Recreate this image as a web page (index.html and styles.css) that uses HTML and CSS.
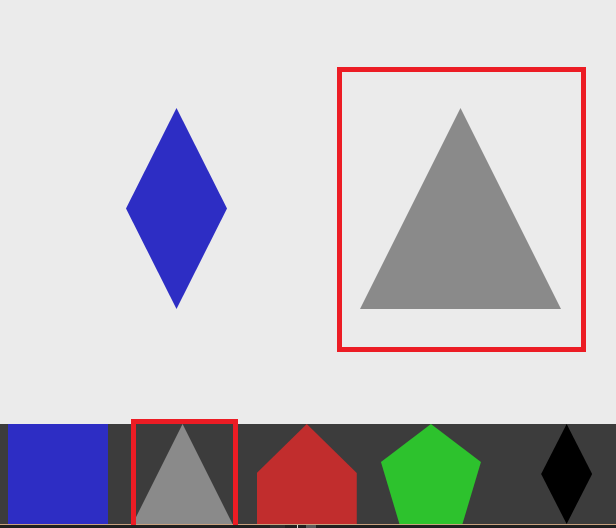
FILE: index.html
```html
<!DOCTYPE html>
<html lang="en">
<head>
<meta charset="utf-8">
<title>Shapes</title>
<link rel="stylesheet" href="styles.css">
</head>
<body>
<main class="stage">
  <div class="shape big-diamond"></div>
  <div class="target">
    <div class="shape big-triangle"></div>
  </div>
</main>
<nav class="tray">
  <div class="item square"></div>
  <div class="item triangle"></div>
  <div class="item house"></div>
  <div class="item pentagon"></div>
  <div class="item rhombus"></div>
  <div class="selection"></div>
</nav>
<div class="strip">
  <span class="strip-a"></span>
  <span class="strip-b"></span>
  <span class="strip-c"></span>
</div>
</body>
</html>
```
FILE: styles.css
```css
html, body {
  margin: 0;
  padding: 0;
  height: 528px;
  overflow: hidden;
  background: #ebebeb;
  font-family: "Liberation Sans", Arial, sans-serif;
}
* { box-sizing: border-box; }

.stage {
  height: 424px;
  display: flex;
  align-items: flex-start;
  padding: 67px 0 0 126px;
}
.shape { flex: none; }
.big-diamond {
  width: 101px;
  height: 201px;
  margin-top: 41px;
  background: #2d2dc4;
  clip-path: polygon(50% 0, 100% 50%, 50% 100%, 0 50%);
}
.target {
  margin-left: 110px;
  width: 249px;
  height: 285px;
  border: 5px solid #ec1c24;
  padding: 36px 20px 38px 18px;
}
.big-triangle {
  width: 201px;
  height: 201px;
  background: #8a8a8a;
  clip-path: polygon(50% 0, 100% 100%, 0 100%);
}

.tray {
  position: relative;
  height: 101px;
  background: #3c3c3c;
  border-bottom: 1px solid #c9a07e;
  display: flex;
  gap: 24.2px;
  padding-left: 8.4px;
}
.item {
  flex: none;
  width: 100px;
  height: 100px;
}
.square { background: #2d2dc4; }
.triangle {
  background: #8a8a8a;
  clip-path: polygon(50% 0, 100% 100%, 0 100%);
}
.house {
  background: #c12d2d;
  clip-path: polygon(50% 0, 100% 49%, 100% 100%, 0 100%, 0 49%);
}
.pentagon {
  background: #2dc22d;
  clip-path: polygon(50% 0, 100% 38%, 81.5% 100%, 18.5% 100%, 0 38%);
}
.rhombus {
  width: 51px;
  margin-left: 36px;
  background: #000;
  clip-path: polygon(50% 0, 100% 50%, 50% 100%, 0 50%);
}
.selection {
  position: absolute;
  left: 131px;
  top: -5px;
  width: 107px;
  height: 112px;
  border: 5px solid #ec1c24;
}

.strip {
  position: relative;
  height: 10px;
  background: #1f1f1f;
}
.strip span { position: absolute; top: 0; height: 10px; }
.strip-a { left: 270px; width: 15px; background: #2e2e2e; }
.strip-b { left: 297px; width: 1px; background: #d8d8d8; }
.strip-c { left: 306px; width: 10px; background: #5c5c5c; }
```
